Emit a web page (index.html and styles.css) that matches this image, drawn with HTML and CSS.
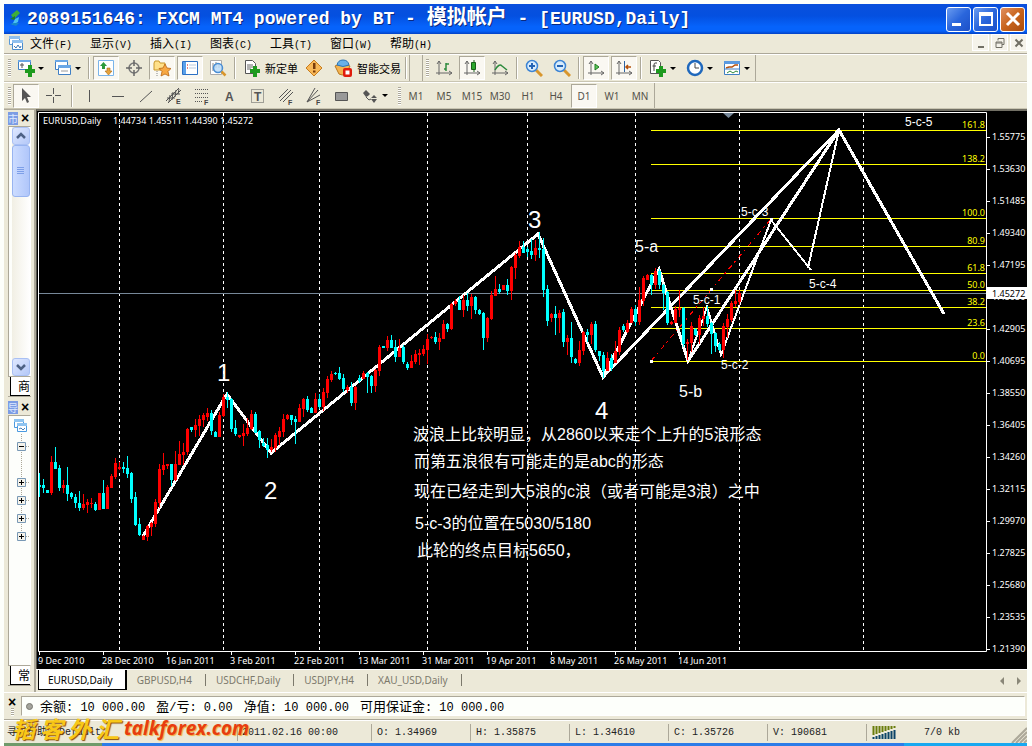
FILE: index.html
```html
<!DOCTYPE html>
<html lang="zh-CN">
<head>
<meta charset="utf-8">
<title>FXCM MT4</title>
<link rel="stylesheet" href="styles.css">
</head>
<body>
<div class="app">
  <header class="title">
    <svg class="logo" width="16" height="22" viewBox="0 0 16 22"><path d="M4 7l6-5 3 3-6 6z" fill="#3fae3a"/><path d="M3 11l5-3v4z" fill="#1c7a2c"/><path d="M12 9l-4 2-3 6 6-3z" fill="#4cc0f0"/><path d="M3 16l6 2 3-3-5 0z" fill="#1688c8"/></svg>
    <h1>2089151646: FXCM MT4 powered by BT - <span class="cn">模拟帐户</span> - [EURUSD,Daily]</h1>
    <button class="win" aria-label="Minimize"><svg width="20" height="20"><path d="M3 14h9v3h-9z" fill="#fff"/></svg></button>
    <button class="win" aria-label="Maximize"><svg width="20" height="20"><path d="M4 4h12v12h-12z M4 6h12" fill="none" stroke="#fff" stroke-width="2"/></svg></button>
    <button class="win close" aria-label="Close"><svg width="20" height="20"><path d="M4 4l12 12M16 4l-12 12" stroke="#fff" stroke-width="3"/></svg></button>
  </header>

  <nav class="menu">
    <svg width="16" height="16" viewBox="0 0 16 16"><path d="M1.500 1.500h10v8h-10z" fill="#fff" stroke="#5b9bd8"/><path d="M1 1h11v3h-11z" fill="#8fc0ee"/><path d="M4.500 5.500h10v9h-10z" fill="#fff" stroke="#4a8ccc"/><path d="M4 5h11v3h-11z" fill="#8fc0ee"/><path d="M6 11l2 2 2-3 2 3 1-2" fill="none" stroke="#3c78b4"/></svg>
    <button>文件<span class="key">(F)</span></button>
    <button>显示<span class="key">(V)</span></button>
    <button>插入<span class="key">(I)</span></button>
    <button>图表<span class="key">(C)</span></button>
    <button>工具<span class="key">(T)</span></button>
    <button>窗口<span class="key">(W)</span></button>
    <button>帮助<span class="key">(H)</span></button>
    <div class="mdi">
      <button aria-label="Minimize chart"><svg width="12" height="12"><path d="M3 9h6v2h-6z" fill="#716f64"/></svg></button>
      <button aria-label="Restore chart"><svg width="12" height="12"><path d="M4 3.500V1.500h6v6h-2M2 5h6v5.500H2zM2 6h6" fill="none" stroke="#716f64"/></svg></button>
      <button aria-label="Close chart"><svg width="12" height="12"><path d="M2.500 2.500l7 7M9.500 2.500l-7 7" stroke="#716f64" stroke-width="2"/></svg></button>
    </div>
  </nav>

  <div class="bar top">
    <div class="group">
      <i class="grip"></i>
      <button class="tool" aria-label="New chart"><svg width="18" height="18"><path d="M1.500 1.500h12v9h-12z" fill="#fff" stroke="#3f7fc4"/><path d="M1 1h13v2h-13z" fill="#6aa7e6"/><path d="M5 4v5M3 6h4" stroke="#555"/><path d="M11 6h4v4h3v4h-3v4h-4v-4H8v-4h3z" fill="#1e9a1e"/></svg></button><button class="drop" aria-label="New chart list"></button>
      <button class="tool" aria-label="Profiles"><svg width="18" height="18"><path d="M1.500 1.500h12v9h-12z" fill="#fff" stroke="#3f7fc4"/><path d="M1 1h13v2h-13z" fill="#6aa7e6"/><path d="M4.500 6.500h12v9h-12z" fill="#fff" stroke="#3f7fc4"/><path d="M4 6h13v3h-13z" fill="#6aa7e6"/><path d="M7 12h7" stroke="#999"/></svg></button><button class="drop" aria-label="Profile list"></button>
      <i class="sep"></i>
      <button class="tool on" aria-label="Market watch"><svg width="18" height="18"><path d="M1.500 1.500h15v15h-15z" fill="#fff" stroke="#7ab4ea"/><path d="M3 7l3.500-4 3.500 4H8v3H5V7z" fill="#2c9a3c"/><path d="M8 12l3.500 4 3.500-4h-2V9h-3v3z" fill="#e6a23c" stroke="#a86a14" stroke-width=".6"/></svg></button>
      <button class="tool" aria-label="Data window"><svg width="18" height="18"><circle cx="9" cy="9" r="5" fill="none" stroke="#777" stroke-width="1.500"/><path d="M9 1v6M9 11v6M1 9h6M11 9h6" stroke="#666" stroke-width="1.500"/></svg></button>
      <button class="tool on" aria-label="Navigator"><svg width="18" height="18"><path d="M1 4l1-2h4l1 2h5v7H1z" fill="#ffe08a" stroke="#c8962a"/><path d="M4 12v5" stroke="#888" stroke-dasharray="1 1"/><path d="M12 5l2 4 4 .5-3 3 1 4.500-4-2-4 2 1-4.500-3-3 4-.5z" fill="#f7a844" stroke="#b86414" stroke-width=".8"/></svg></button>
      <button class="tool on" aria-label="Terminal"><svg width="18" height="18"><path d="M1.500 2.500h15v13h-15z" fill="#fff" stroke="#2c70c4"/><path d="M2 3h3v12H2z" fill="#5aa0ea"/><path d="M6 6h1M6 9h1" stroke="#c00"/><path d="M8 6h7M8 9h7" stroke="#bcd"/></svg></button>
      <button class="tool" aria-label="Strategy tester"><svg width="18" height="18"><path d="M1.500 1.500h11v14h-11z" fill="#fff" stroke="#aaa"/><path d="M4 4v8M7 3v6M10 4v5" stroke="#888"/><circle cx="9" cy="9" r="4.500" fill="#bcdcf8" fill-opacity=".85" stroke="#4a8ed4" stroke-width="1.500"/><path d="M12.500 12.500l4 4" stroke="#d8962c" stroke-width="2.500"/></svg></button>
      <i class="sep"></i>
      <button class="tool text"><svg width="16" height="18"><path d="M1.500 1.500h7l3 3v10h-10z" fill="#fff" stroke="#555"/><path d="M3 6h6M3 8h6M3 10h4" stroke="#666"/><path d="M9 7h4v3h3v4h-3v4H9v-4H6v-4h3z" fill="#1e9a1e"/></svg>新定单</button>
      <button class="tool" aria-label="MetaEditor"><svg width="18" height="18"><path d="M9 1l8 8-8 8-8-8z" fill="#f8b858" stroke="#c87c1c"/><path d="M8 4h2.500v6H8zM8 11.500h2.500v2H8z" fill="#7a3c0a"/></svg></button>
      <button class="tool text"><svg width="18" height="18"><path d="M1 7q8-4 15 0l-4 8q-4 2-7 0z" fill="#f4b450" stroke="#b87820"/><path d="M3 6q1-5 6-5t6 5q-6 3-12 0z" fill="#68b0e8" stroke="#2c74b4"/><rect x="9" y="9" width="9" height="9" rx="2" fill="#e01c0c"/><path d="M11.500 11.500h4v4h-4z" fill="#fff"/></svg>智能交易</button>
      <i class="sep"></i>
    </div>
    <div class="group second">
      <i class="grip"></i>
      <button class="tool" aria-label="Bar chart"><svg width="18" height="18"><path d="M4 2v14M1 14h16M2 5l2-3 2 3M14 12l3 2-3 2" fill="none" stroke="#666"/><path d="M9 10h2M11 4v8M11 5h3" stroke="#2c8a3c" stroke-width="1.500"/></svg></button>
      <button class="tool on" aria-label="Candlesticks"><svg width="18" height="18"><path d="M4 2v14M1 14h16M2 5l2-3 2 3M14 12l3 2-3 2" fill="none" stroke="#666"/><path d="M11 1v12" stroke="#186018"/><path d="M8.500 3.500h4v7h-4z" fill="#2ca82c" stroke="#186018"/></svg></button>
      <button class="tool" aria-label="Line chart"><svg width="18" height="18"><path d="M4 2v14M1 14h16M2 5l2-3 2 3M14 12l3 2-3 2" fill="none" stroke="#666"/><path d="M4 11q4-7 7-4l5 4" fill="none" stroke="#2c8a3c" stroke-width="1.500"/></svg></button>
      <i class="sep"></i>
      <button class="tool" aria-label="Zoom in"><svg width="18" height="18"><path d="M11 11l6 6" stroke="#d8962c" stroke-width="3"/><circle cx="7" cy="7" r="5.500" fill="#d8ecfc" stroke="#3c84d4" stroke-width="1.500"/><path d="M4 7h6M7 4v6" stroke="#2464b4" stroke-width="2"/></svg></button>
      <button class="tool" aria-label="Zoom out"><svg width="18" height="18"><path d="M11 11l6 6" stroke="#d8962c" stroke-width="3"/><circle cx="7" cy="7" r="5.500" fill="#d8ecfc" stroke="#3c84d4" stroke-width="1.500"/><path d="M4 7h6" stroke="#2464b4" stroke-width="2"/></svg></button>
      <i class="sep"></i>
      <button class="tool on" aria-label="Auto scroll"><svg width="18" height="18"><path d="M4 2v14M1 14h16M2 5l2-3 2 3M14 12l3 2-3 2" fill="none" stroke="#666"/><path d="M8 5l4 3-4 3z" fill="#5cc85c" stroke="#1e7a1e"/></svg></button>
      <button class="tool on" aria-label="Chart shift"><svg width="18" height="18"><path d="M4 2v14M1 14h16M2 5l2-3 2 3M14 12l3 2-3 2" fill="none" stroke="#666"/><path d="M9.500 2v11" stroke="#2c64a4"/><path d="M16 8h-5M13 6l-2 2 2 2" fill="none" stroke="#b4500c" stroke-width="1.500"/></svg></button>
      <i class="sep"></i>
      <button class="tool" aria-label="Indicators"><svg width="18" height="18"><path d="M1.500 1.500h8l2 2v11h-10z" fill="#fff" stroke="#555"/><path d="M8 4H6q-1 0-1 2v6M3.500 7H7" fill="none" stroke="#444"/><path d="M10 7h4v3h3v4h-3v4h-4v-4H7v-4h3z" fill="#1e9a1e"/></svg></button><button class="drop" aria-label="Indicator list"></button>
      <button class="tool" aria-label="Periods"><svg width="18" height="18"><circle cx="9" cy="9" r="7" fill="#fff" stroke="#1f68bc" stroke-width="2.500"/><path d="M9 4v5h4" fill="none" stroke="#444"/></svg></button><button class="drop" aria-label="Period list"></button>
      <button class="tool" aria-label="Templates"><svg width="18" height="18"><path d="M1.500 2.500h15v13h-15z" fill="#fff" stroke="#3f7fc4"/><path d="M1 2h16v3H1z" fill="#5a9ae0"/><path d="M3 9l3-1 3 0 3-2h3" fill="none" stroke="#b4500c" stroke-width="1.500"/><path d="M2 10h14" stroke="#3f7fc4"/><path d="M4 14l3-2 3 2 3-2 2 1" fill="none" stroke="#2c8a3c"/></svg></button><button class="drop" aria-label="Template list"></button>
    </div>
  </div>

  <div class="bar">
    <div class="group drawing">
      <i class="grip"></i>
      <button class="tool on" aria-label="Cursor"><svg width="18" height="18"><path d="M5 1v13l3-3 2 5 2-1-2-5h4z" fill="#555"/></svg></button>
      <button class="tool" aria-label="Crosshair"><svg width="18" height="18"><path d="M8.500 1v6M8.500 10v6M1 8.500h6M10 8.500h6" stroke="#555"/></svg></button>
      <i class="sep"></i>
      <button class="tool" aria-label="Vertical line"><svg width="18" height="18"><path d="M8.500 3v12" stroke="#555"/></svg></button>
      <button class="tool" aria-label="Horizontal line"><svg width="18" height="18"><path d="M3 9.500h12" stroke="#555"/></svg></button>
      <button class="tool" aria-label="Trendline"><svg width="18" height="18"><path d="M3 15L15 4" stroke="#555"/></svg></button>
      <button class="tool" aria-label="Channel"><svg width="18" height="18"><path d="M1 14L14 1M3 16L16 3M5 8l-1 7M8 5l-1 8M11 3l-1 7M14 2l-1 5M2 11h8M6 7h9" stroke="#555" fill="none"/><text x="11" y="17" class="sub">E</text></svg></button>
      <button class="tool" aria-label="Fibonacci"><svg width="18" height="18"><path d="M2 2.500h13M2 6.500h13M2 10.500h13M2 14.500h8" stroke="#555" stroke-dasharray="1 1"/><text x="11" y="18" class="sub">F</text></svg></button>
      <button class="tool" aria-label="Text"><svg width="18" height="18"><text x="4" y="14" class="letter">A</text></svg></button>
      <button class="tool" aria-label="Text label"><svg width="18" height="18"><path d="M2.500 2.500h12v13h-12z" fill="none" stroke="#555" stroke-dasharray="1 1"/><text x="5" y="14" class="letter">T</text></svg></button>
      <button class="tool" aria-label="Fibonacci channel"><svg width="18" height="18"><path d="M2 11L11 2M3 14L14 3M6 15L16 5" stroke="#555"/><text x="11" y="18" class="sub">F</text></svg></button>
      <button class="tool" aria-label="Fibonacci fan"><svg width="18" height="18"><path d="M2 15L10 1M2 15L13 3M2 15L15 8" stroke="#555"/><text x="11" y="18" class="sub">F</text></svg></button>
      <button class="tool" aria-label="Rectangle"><svg width="18" height="18"><path d="M2.500 5.500h12v8h-12z" fill="#999" stroke="#555"/></svg></button>
      <button class="tool" aria-label="Arrows"><svg width="18" height="18"><path d="M5 3l4 4-2 2-2 1-3-4z" fill="#555"/><path d="M10 12h6l-3 4zM10 11l3-3 3 3z" fill="#555"/><path d="M5 10l3 3 2-1" fill="none" stroke="#555"/></svg></button><button class="drop" aria-label="Arrow list"></button>
    </div>
    <div class="group frames">
      <i class="grip"></i>
      <button class="tool">M1</button><button class="tool">M5</button><button class="tool">M15</button><button class="tool">M30</button><button class="tool">H1</button><button class="tool">H4</button><button class="tool on">D1</button><button class="tool">W1</button><button class="tool">MN</button>
    </div>
  </div>

  <main class="main">
    <aside class="side">
      <section class="panel">
        <div class="phead"><b class="cut">市</b><button class="x" aria-label="Close market watch">×</button></div>
        <div class="pbody watch">
          <div class="scroll">
            <button aria-label="Scroll up"><svg width="14" height="14"><path d="M3 9l4-4 4 4" fill="none" stroke="#4d6185" stroke-width="2.500"/></svg></button>
            <div class="thumb"><svg width="8" height="8"><path d="M0 .5h7M0 2.500h7M0 4.500h7M0 6.500h7" stroke="#7d9fe8"/></svg></div>
            <button class="down" aria-label="Scroll down"><svg width="14" height="14"><path d="M3 5l4 4 4-4" fill="none" stroke="#4d6185" stroke-width="2.500"/></svg></button>
          </div>
        </div>
        <div class="ptab">商</div>
      </section>
      <section class="panel">
        <div class="phead"><b class="cut">导</b><button class="x" aria-label="Close navigator">×</button></div>
        <div class="pbody">
          <svg class="tree" width="20" height="130" viewBox="0 0 20 130"><path d="M2.500 3.500h9v8h-9z" fill="#fff" stroke="#4a9ae0"/><path d="M2 3h10v3H2z" fill="#8fc4f0"/><path d="M5.500 7.500h9v8h-9z" fill="#fff" stroke="#4a9ae0"/><path d="M5 7h10v3H5z" fill="#8fc4f0"/><path d="M7 13l2-1 2 2 2-2" fill="none" stroke="#4a80b4"/><path d="M9.500 18v105M10 30.500h8M10 66.500h8M10 84.500h8M10 102.500h8M10 120.500h8" fill="none" stroke="#aca899" stroke-dasharray="1 1"/><path d="M5.500 26.500h8v8h-8zM5.500 62.500h8v8h-8zM5.500 80.500h8v8h-8zM5.500 98.500h8v8h-8zM5.500 116.500h8v8h-8z" fill="#f4f2ea" stroke="#7898b5"/><path d="M7 30.500h5M7 66.500h5M7 84.500h5M7 102.500h5M7 120.500h5M9.500 64v5M9.500 82v5M9.500 100v5M9.500 118v5" stroke="#000"/></svg>
        </div>
        <div class="ptab">常</div>
      </section>
    </aside>

    <div class="work">
      <div class="chart">
        <svg id="chart" viewBox="37 111 990 558" preserveAspectRatio="xMinYMin meet">
          <g shape-rendering="crispEdges" fill="none">
            <path d="M119.500 113V651M223.500 113V651M319.500 113V651M427.500 113V651M527.500 113V651M635.500 113V651M739.500 113V651M863.500 113V651" stroke="#fff" stroke-dasharray="3 3"/>
            <path d="M39 293.500H986" stroke="#778899"/>
            <path d="M651 130.500H986M651 164.500H986M651 218.500H986M651 246.500H986M651 273.500H986M651 290.500H986M651 307.500H986M651 328.500H986M651 361.500H986" stroke="#ff0"/>
            <path d="M651 361L771 219" stroke="#f00" stroke-dasharray="5 4 2 4"/>
            <path d="M143 536L227 394L271 453L538 234L603 377L839 130M603 377L659 269L688 361L839 130L944 314" stroke="#fff" stroke-width="3"/>
            <path d="M688 361L707 307L721 355L771 220L811 270M808 268L839 130" stroke="#fff" stroke-width="2"/>
            <path d="M650 360h3v3h-3zM710 288h3v3h-3zM770 218h3v3h-3z" fill="#fff"/>
          </g>
          <g id="candles" shape-rendering="crispEdges"></g>
          <path d="M38.500 112.500H986.500V651.500H38.500z" fill="none" stroke="#fff"/>
          <path d="M723 113h11l-5.500 5z" fill="#778899"/>
          <path id="ticks" fill="none" stroke="#fff"/>
          <g class="small" id="scales"><text x="43" y="124">EURUSD,Daily</text><text x="113" y="124">1.44734 1.45511 1.44390 1.45272</text></g>
          <path d="M987 287h40v12h-40z" fill="#fff"/>
          <text x="992" y="297" class="small now">1.45272</text>
          <g class="small fib">
            <text x="985" y="128">161.8</text><text x="985" y="162">138.2</text><text x="985" y="216">100.0</text><text x="985" y="244">80.9</text><text x="985" y="271">61.8</text><text x="985" y="288">50.0</text><text x="985" y="305">38.2</text><text x="985" y="326">23.6</text><text x="985" y="359">0.0</text>
          </g>
          <g class="wave"><text x="217" y="381">1</text><text x="264" y="499">2</text><text x="528" y="228">3</text><text x="595" y="419">4</text></g>
          <g class="note"><text x="635" y="252">5-a</text><text x="679" y="397">5-b</text>
            <text x="413" y="440">波浪上比较明显，从2860以来走个上升的5浪形态</text>
            <text x="414" y="467">而第五浪很有可能走的是abc的形态</text>
            <text x="414" y="497">现在已经走到大5浪的c浪（或者可能是3浪）之中</text>
            <text x="415" y="529">5-c-3的位置在5030/5180</text>
            <text x="417" y="556">此轮的终点目标5650，</text></g>
          <g class="minor"><text x="905" y="126">5-c-5</text><text x="741" y="216">5-c-3</text><text x="809" y="288">5-c-4</text><text x="693" y="304">5-c-1</text><text x="721" y="369">5-c-2</text></g>
        </svg>
      </div>
      <div class="tabs">
        <button class="active">EURUSD,Daily</button><button>GBPUSD,H4</button><button>USDCHF,Daily</button><button>USDJPY,H4</button><button>XAU_USD,Daily</button>
        <svg class="tabnav" width="24" height="10"><path d="M5 1v8L1 5zM18 1v8l4-4z" fill="#8a8778"/></svg>
      </div>
    </div>
  </main>

  <section class="account">
    <div class="handle"><button class="x" aria-label="Close terminal">×</button><i class="grip"></i></div>
    <div class="funds">
      <i class="dot"></i>
      <span><b>余额</b>: 10 000.00</span><span><b>盈</b>/<b>亏</b>: 0.00</span><span><b>净值</b>: 10 000.00</span><span><b>可用保证金</b>: 10 000.00</span>
    </div>
  </section>

  <footer class="status">
    <span class="help">寻求帮助</span><span class="profile">Default</span><span class="time">2011.02.16 00:00</span><span>O: 1.34969</span><span>H: 1.35875</span><span>L: 1.34610</span><span>C: 1.35726</span><span>V: 190681</span>
    <span class="net"><svg width="24" height="13"><path d="M1.500 0v9M4.500 0v8M7.500 0v7M10.500 0v6M13.500 0v5M16.500 0v4M19.500 0v3M22.500 0v2" stroke="#6a7c0c" stroke-width="2"/><path d="M1.500 11v2M4.500 10v3M7.500 9v4M10.500 8v5M13.500 7v6M16.500 6v7M19.500 5v8M22.500 4v9" stroke="#0c4468" stroke-width="2"/></svg>7/0 kb</span>
    <svg class="size" width="16" height="16"><path d="M1 16L16 1M5 16L16 5M9 16L16 9M13 16l3-3" stroke="#aca899" stroke-width="2"/></svg>
    <div class="mark"><span>韬</span><span>客</span><span>外</span><span>汇</span><em>talkforex.com</em></div>
  </footer>
  <div class="desk"></div>
</div>
<script src="chart.js"></script>
</body>
</html>
```
FILE: styles.css
```css
* { box-sizing: border-box; }
body { margin: 0; background: #fdfffb; font-family: "Noto Sans", "Noto Sans CJK SC", sans-serif; font-size: 11px; color: #000; }
button { border: 0; padding: 0; margin: 0; background: none; font: inherit; color: inherit; }
h1 { margin: 0; }
svg { display: block; flex: none; }
.app { display: flex; flex-direction: column; min-height: 100vh; padding: 4px 5px 0 4px; }

.title { display: flex; align-items: center; gap: 2px; height: 30px; flex: none; padding: 0 2px 0 3px; background: linear-gradient(#0a50dc, #0450e0 40%, #0663fb 75%, #0663fb 90%, #0341c4); }
.title h1 { flex: 1; margin-left: 2px; font: bold 18px/26px "Liberation Mono", "Noto Sans CJK SC", monospace; color: #fff; text-shadow: 1px 1px #0a2a80; white-space: nowrap; overflow: hidden; }
.title .cn { font-size: 20px; line-height: 20px; }
.win { width: 25px; height: 25px; display: grid; place-items: center; border: 1px solid #fff; border-radius: 3px; background: linear-gradient(135deg, #6a9cf0, #2a66dc 50%, #1c50c8); }
.win.close { background: linear-gradient(135deg, #e09060, #c8641c 50%, #a84c10); }

.menu { display: flex; align-items: center; height: 20px; flex: none; padding: 0 0 2px 4px; background: #ece9d8; border-bottom: 1px solid #aca899; }
.menu > svg { margin-right: 6px; }
.menu > button { width: 60px; text-align: left; font: 12px/16px "Noto Sans CJK SC", sans-serif; white-space: nowrap; }
.key { font: 10px "Liberation Mono", monospace; }
.mdi { display: flex; gap: 2px; margin-left: auto; }
.mdi button { width: 17px; height: 17px; display: grid; place-items: center; background: #f5f3ea; border: 1px solid #fff; }

.bar { display: flex; height: 27px; flex: none; background: #ece9d8; border-top: 1px solid #fff; border-bottom: 1px solid #c9c5b2; }
.bar.top { height: 28px; }
.group { display: flex; align-items: center; gap: 2px; padding: 0 1px 0 4px; border-right: 1px solid #aca899; }
.group.second { margin-left: 12px; padding-left: 3px; border-left: 1px solid #aca899; }
.grip { width: 3px; height: 18px; flex: none; background: repeating-linear-gradient(#aca899 0 1px, #fff 1px 2px); }
.sep { width: 2px; height: 22px; flex: none; margin: 0 1px; border-left: 1px solid #aca899; border-right: 1px solid #fff; }
.drawing .sep { margin: 0 2px; }
.drawing { border-right: 0; }
.tool { width: 26px; height: 24px; flex: none; display: flex; align-items: center; justify-content: center; }
.tool.on { background: #faf8f2; border: 1px solid; border-color: #aca899 #fff #fff #aca899; }
.tool.text { width: auto; padding: 0 1px 0 5px; gap: 5px; font: 11px "Noto Sans CJK SC", sans-serif; white-space: nowrap; }
.drop { width: 9px; height: 24px; margin-left: -3px; margin-right: 1px; flex: none; display: grid; place-items: center start; }
.drop::after { content: ""; border: 3px solid transparent; border-top-color: #000; border-bottom: 0; }
.frames { margin-left: 4px; padding-left: 1px; }
.frames .tool { font: 10px "Noto Sans", sans-serif; color: #55524a; }
.sub { font: bold 7px "Liberation Sans", sans-serif; fill: #444; }
.letter { font: bold 12px "Liberation Sans", sans-serif; fill: #555; }

.main { display: flex; flex: 1; min-height: 0; background: #ece9d8; }
.side { width: 32px; flex: none; display: flex; flex-direction: column; gap: 2px; padding: 0 3px 6px 4px; border-top: 1px solid #aca899; border-right: 2px solid #aca899; }
.panel { flex: 1; min-height: 0; display: flex; flex-direction: column; border-bottom: 1px solid #aca899; overflow: hidden; }
.phead { display: flex; align-items: center; gap: 2px; height: 16px; flex: none; }
.cut { width: 10px; height: 13px; overflow: hidden; background: #7c9ce4; color: #dce8ff; font: 10px/13px "Noto Sans CJK SC", sans-serif; }
.x { width: 10px; height: 12px; font: bold 14px/12px "Liberation Sans", sans-serif; }
.pbody { flex: 1; min-height: 0; border: 1px solid #aca899; border-right-color: #fff; background: #fdfefb; overflow: hidden; }
.watch { display: flex; justify-content: flex-end; }
.scroll { width: 18px; display: flex; flex-direction: column; background: linear-gradient(90deg, #f1efe4, #fff); }
.scroll button { height: 18px; flex: none; display: grid; place-items: center; border: 1px solid #a9c0f4; border-radius: 3px; background: linear-gradient(135deg, #dfe8ff, #b4c8f8); }
.scroll .down { margin-top: auto; }
.thumb { height: 52px; display: grid; place-items: center; border: 1px solid #98b4f0; border-radius: 3px; background: linear-gradient(90deg, #ccdcff, #b0c6fa); }
.ptab { width: 20px; height: 19px; flex: none; margin-left: 2px; padding-left: 7px; overflow: hidden; background: #fff; border-left: 1px solid #000; border-bottom: 1px solid #000; font: 12px/17px "Noto Sans CJK SC", sans-serif; }
.tree { margin-left: 3px; }

.work { flex: 1; min-width: 0; display: flex; flex-direction: column; }
.chart { flex: 1; min-height: 0; border-top: 2px solid #716f64; border-left: 1px solid #55534a; background: #000; }
.chart svg { width: 100%; height: 100%; }
.small { font: 9px "Noto Sans", sans-serif; fill: #fff; }
.small.now { fill: #000; }
.small.fib { fill: #ff0; text-anchor: end; }
.wave { font: 24px "Liberation Sans", sans-serif; fill: #fff; }
.note { font: 16px "Liberation Sans", "Noto Sans CJK SC", sans-serif; fill: #fff; }
.minor { font: 12px "Liberation Sans", sans-serif; fill: #fff; }

.tabs { display: flex; align-items: flex-start; height: 23px; flex: none; padding-left: 2px; border-top: 1px solid #fff; background: #ece9d8; color: #7c796c; }
.tabs button { height: 20px; padding: 0 14px 0 10px; font-size: 10px; line-height: 20px; white-space: nowrap; position: relative; }
.tabs button + button::after { content: ""; position: absolute; right: 0; top: 4px; height: 12px; border-right: 1px solid #7c796c; }
.tabs .active { padding: 0 12px 0 9px; background: #fff; color: #000; border: 1px solid #000; border-top: 0; border-right-width: 2px; }
.tabnav { margin: 6px 4px 0 auto; }

.account { display: flex; height: 28px; flex: none; padding: 3px 2px; gap: 3px; background: #ece9d8; border-top: 1px solid #fff; border-bottom: 1px solid #aca899; }
.handle { width: 12px; display: flex; flex-direction: column; align-items: center; }
.handle .grip { height: 8px; }
.funds { flex: 1; display: flex; align-items: center; gap: 11px; padding-left: 4px; border: 1px solid; border-color: #aca899 #fff #fff #aca899; background: #fdfffb; font: 12px "Liberation Mono", monospace; white-space: nowrap; }
.funds b { font: 13px/16px "Noto Sans CJK SC", sans-serif; }
.dot { width: 7px; height: 7px; margin-right: -4px; border-radius: 50%; background: #a4a49c; border: 1px solid #77776f; }

.status { position: relative; display: flex; align-items: center; height: 23px; flex: none; background: #ece9d8; border-top: 1px solid #fff; font: 10px "Liberation Mono", "Noto Sans CJK SC", monospace; color: #222; white-space: nowrap; }
.status > span { width: 99px; height: 17px; flex: none; padding-left: 5px; line-height: 17px; border-left: 1px solid #aca899; }
.status > .help { width: 44px; padding-left: 3px; border: 0; font-size: 10px; }
.status > .profile { width: 189px; padding-left: 10px; }
.status > .time { width: 134px; padding-left: 4px; }
.status > .net { display: flex; align-items: center; gap: 28px; width: 140px; }
.size { margin-left: auto; align-self: flex-end; }
.mark { position: absolute; left: 8px; bottom: 1px; display: flex; align-items: center; font: italic bold 23px/28px "Noto Sans CJK SC", sans-serif; color: #f8c818; text-shadow: 1px 1px 1px #8a4c08; }
.mark span { width: 28px; }
.mark em { font: italic bold 19px/28px "Open Sans", "Noto Sans", sans-serif; color: #e83c10; text-shadow: 1px 1px 1px #f0b040; }
.desk { height: 3px; flex: none; background: linear-gradient(90deg, #6f9a6a 98px, #2c7ce8 98px 900px, #18a8f0 900px); }
```
FILE: chart.js
```js
// One entry per bar: direction, high, body top, body bottom, low.
const bars = `
c473,485,487,497 c479,485,488,493 c490,490,493,493 r456,462,493,495 c447,462,469,469 c465,468,488,491
r480,485,488,493 c467,485,494,501 c492,493,497,499 c494,497,503,508 c491,503,508,511 r494,504,508,510
r499,502,505,513 r498,503,504,508 c502,504,510,511 r493,493,510,510 c480,493,509,509 r485,487,509,509
r474,476,488,488 r458,463,477,479 r462,467,469,470 c462,467,469,473 c456,468,474,478 c472,473,499,503
c492,497,525,526 c518,524,535,536 r535,536,540,540 r525,526,537,541 r522,523,527,536 r499,502,524,527
r464,469,503,508 r453,465,470,475 r464,464,466,469 c464,464,480,486 r451,464,480,481 r441,454,465,465
r443,452,455,465 r428,429,452,455 c427,427,430,432 r419,425,430,437 r415,419,426,436 r413,415,420,427
r408,413,417,421 c410,413,431,435 c431,432,437,437 r412,415,437,437 r394,397,416,417 c392,397,400,408
c398,399,429,432 c420,428,434,436 r435,435,437,438 r424,433,436,446 r418,428,434,436 r410,414,429,430
c412,414,433,433 c430,431,440,448 c438,443,446,447 c438,445,450,458 r439,447,450,452 r433,435,448,452
r427,431,437,445 r414,419,432,437 r414,415,419,420 c415,415,420,425 c416,419,422,444 r404,408,422,422
r398,399,409,417 c396,399,410,412 c407,408,413,413 r393,399,413,413 c394,399,407,409 r388,392,407,411
r376,379,393,398 r371,374,380,382 c372,373,374,375 c367,373,379,380 c374,378,389,392 r385,387,390,393
c382,387,403,406 r386,387,403,410 c375,378,381,383 r371,373,379,379 c372,373,377,393 c375,376,386,393
r369,370,386,392 r345,347,371,376 c346,346,348,348 r336,340,348,351 c335,340,348,348 c340,347,357,362
r339,348,357,357 c345,347,362,364 c362,364,368,370 r355,361,368,368 r350,354,362,364 r349,353,355,365
r345,349,354,356 r334,339,350,364 r336,337,338,339 c332,337,342,344 r333,338,342,350 r320,324,339,339
c323,324,329,332 r303,304,329,330 r299,301,304,306 c296,300,310,310 r295,300,310,317 c293,300,306,311
r294,297,306,319 c296,297,310,314 c309,310,314,315 c312,313,338,350 r317,318,338,342 r291,295,319,320
r276,289,296,296 c284,289,292,294 r285,285,290,290 c279,285,291,295 r266,267,291,300 r253,255,268,279
r241,247,256,258 c241,247,253,253 c247,249,252,257 c239,251,255,259 r240,248,255,261 c232,248,250,258
c238,249,290,297 c285,289,321,326 r313,314,318,322 c306,314,318,335 r310,313,318,333 c309,312,342,347
r335,338,342,355 c322,338,357,363 c358,359,363,364 r341,350,363,366 r331,332,351,355 c329,332,335,342
r322,324,335,344 c321,324,350,352 c351,351,356,361 c352,355,371,378 r352,358,371,371 c354,358,368,371
r341,351,363,363 r327,330,352,355 c324,326,330,332 r320,323,332,333 r307,309,323,323 c305,309,322,326
r287,300,322,325 r276,278,301,306 r274,275,280,280 c274,275,285,295 r268,271,285,289 c269,271,285,289
c284,285,293,310 c291,292,323,325 r321,322,324,325 r306,309,323,323 r290,308,310,317 c307,308,344,347
r339,342,344,360 r322,326,343,352 c328,329,335,336 r315,318,335,344 r307,316,319,326 c306,316,324,327
c322,323,334,354 c332,333,346,352 c342,344,350,351 r323,326,350,358 r314,319,327,338 r301,303,320,322
r290,301,304,307 r290,293,302,305`.trim().split(/\s+/);

const NS = 'http://www.w3.org/2000/svg';
const paths = { r: '', c: '' };
bars.forEach((bar, i) => {
  const x = 39 + i * 4;
  const [high, top, bottom, low] = bar.slice(1).split(',').map(Number);
  paths[bar[0]] += `M${x} ${high}h1V${low}h-1z`;
  paths[bar[0]] += `M${Math.max(x - 1, 39)} ${top}H${x + 2}V${bottom}H${Math.max(x - 1, 39)}z`;
});
for (const [kind, color] of [['r', '#f00'], ['c', '#0ff']]) {
  const path = document.createElementNS(NS, 'path');
  path.setAttribute('d', paths[kind]);
  path.setAttribute('fill', color);
  document.getElementById('candles').append(path);
}

const scales = document.getElementById('scales');
let ticks = '';
function label(x, y, value) {
  const text = document.createElementNS(NS, 'text');
  text.setAttribute('x', x);
  text.setAttribute('y', y);
  text.textContent = value;
  scales.append(text);
}
['1.55775', '1.53630', '1.51485', '1.49340', '1.47195', '1.45050', '1.42905', '1.40695', '1.38550', '1.36405', '1.34260', '1.32115', '1.29970', '1.27825', '1.25680', '1.23535', '1.21390'].forEach((price, i) => {
  const y = 137 + i * 32;
  label(992, y + 3, price);
  ticks += `M987 ${y + 0.5}h3`;
});
['9 Dec 2010', '28 Dec 2010', '16 Jan 2011', '3 Feb 2011', '22 Feb 2011', '13 Mar 2011', '31 Mar 2011', '19 Apr 2011', '8 May 2011', '26 May 2011', '14 Jun 2011'].forEach((date, i) => {
  label(38 + i * 64, 664, date);
  ticks += `M${39.5 + i * 64} 652v3`;
});
document.getElementById('ticks').setAttribute('d', ticks);
```
